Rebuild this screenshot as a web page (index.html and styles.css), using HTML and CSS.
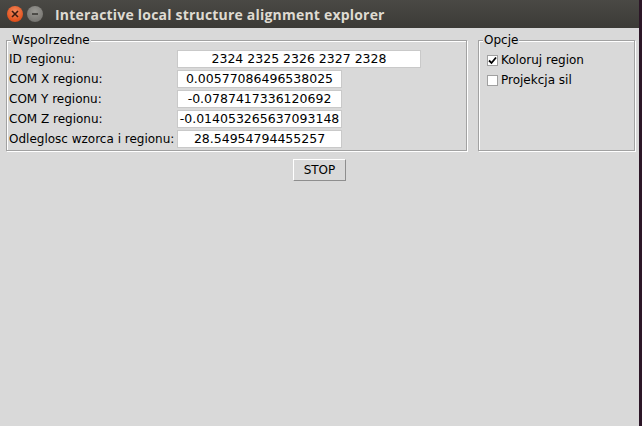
FILE: index.html
```html
<!DOCTYPE html>
<html>
<head>
<meta charset="utf-8">
<link rel="stylesheet" href="styles.css">
</head>
<body>
<div class="window">
  <div class="titlebar">
    <span class="btn btn-close"><svg width="8" height="8" viewBox="0 0 8 8"><path d="M1 1L7 7M7 1L1 7" stroke="#3b1a10" stroke-width="1.6"/></svg></span>
    <span class="btn btn-min"><svg width="8" height="8" viewBox="0 0 8 8"><path d="M1 4H7" stroke="#3c3b37" stroke-width="1.6"/></svg></span>
    <span class="title">Interactive local structure alignment explorer</span>
  </div>
  <div class="content">
    <div class="frames">
      <div class="frame frame-coords">
        <span class="legend">Wspolrzedne</span>
        <div class="grid">
          <span class="label">ID regionu:</span>
          <span class="entry entry-wide">2324 2325 2326 2327 2328</span>
          <span class="label">COM X regionu:</span>
          <span class="entry">0.00577086496538025</span>
          <span class="label">COM Y regionu:</span>
          <span class="entry">-0.0787417336120692</span>
          <span class="label">COM Z regionu:</span>
          <span class="entry">-0.014053265637093148</span>
          <span class="label">Odleglosc wzorca i regionu:</span>
          <span class="entry">28.54954794455257</span>
        </div>
      </div>
      <div class="frame frame-opts">
        <span class="legend">Opcje</span>
        <div class="checks">
          <label class="check"><span class="box"><svg width="9" height="9" viewBox="0 0 9 9"><path d="M1 4.5L3.5 7L8 1.5" fill="none" stroke="#000" stroke-width="1.8"/></svg></span>Koloruj region</label>
          <label class="check"><span class="box"></span>Projekcja sil</label>
        </div>
      </div>
    </div>
    <div class="actions">
      <button class="stop">STOP</button>
    </div>
  </div>
</div>
</body>
</html>
```

FILE: styles.css
```css
html, body {
  margin: 0;
  padding: 0;
}
body {
  background: #2c1627;
  width: 642px;
  height: 426px;
  overflow: hidden;
  font-family: "DejaVu Sans", sans-serif;
  font-size: 12px;
  color: #000;
}
.window {
  width: 639px;
  height: 426px;
  background: #d9d9d9;
}
.titlebar {
  height: 28px;
  background: linear-gradient(#4a4945, #3c3b37);
  display: flex;
  align-items: center;
  padding-left: 7px;
  box-sizing: border-box;
}
.btn {
  width: 16px;
  height: 16px;
  border-radius: 50%;
  display: flex;
  align-items: center;
  justify-content: center;
  margin-right: 4px;
}
.btn-close {
  background: radial-gradient(circle at 50% 35%, #f48a5e, #e2521d 70%, #b8401a);
}
.btn-min {
  background: radial-gradient(circle at 50% 35%, #9a9994, #7a7975 70%, #5f5e5a);
}
.title {
  margin-left: 8px;
  color: #dfdbd2;
  font-family: "Open Sans", sans-serif;
  font-weight: bold;
  font-size: 14px;
  letter-spacing: 0.2px;
}
.content {
  padding: 12px 0 0 6px;
}
.frames {
  display: flex;
  gap: 11px;
}
.frame {
  position: relative;
  border: 1px solid #a2a2a2;
  box-shadow: inset 1px 1px 0 #fff, 1px 1px 0 #fff;
}
.legend {
  position: absolute;
  top: -8px;
  left: 4px;
  background: #d9d9d9;
  padding: 0 1px;
  line-height: 14px;
  font-size: 12px;
}
.frame-coords {
  width: 461px;
  box-sizing: border-box;
  height: 111px;
  padding: 9px 0 0 2px;
}
.grid {
  display: grid;
  grid-template-columns: 168px auto;
  row-gap: 2px;
  align-items: center;
}
.label {
  line-height: 18px;
}
.entry {
  height: 18px;
  box-sizing: border-box;
  width: 165px;
  background: #fff;
  border: 1px solid #c9c9c9;
  text-align: center;
  line-height: 16px;
  font-size: 12.5px;
  white-space: nowrap;
  overflow: hidden;
}
.entry-wide {
  width: 244px;
}
.frame-opts {
  width: 157px;
  height: 111px;
  box-sizing: border-box;
  padding: 11px 0 0 8px;
}
.checks {
  display: flex;
  flex-direction: column;
  gap: 4px;
}
.check {
  display: flex;
  align-items: center;
  height: 16px;
}
.box {
  width: 11px;
  height: 11px;
  box-sizing: border-box;
  background: #fff;
  border: 1px solid #a0a0a0;
  margin-right: 3px;
  display: flex;
  align-items: center;
  justify-content: center;
}
.actions {
  display: flex;
  justify-content: center;
  padding-top: 8px;
  padding-right: 6px;
}
.stop {
  width: 53px;
  height: 22px;
  font-family: "DejaVu Sans", sans-serif;
  font-size: 12px;
  color: #000;
  background: #d9d9d9;
  border: 1px solid;
  border-color: #fff #8e8e8e #8e8e8e #fff;
  padding: 0;
}
```
